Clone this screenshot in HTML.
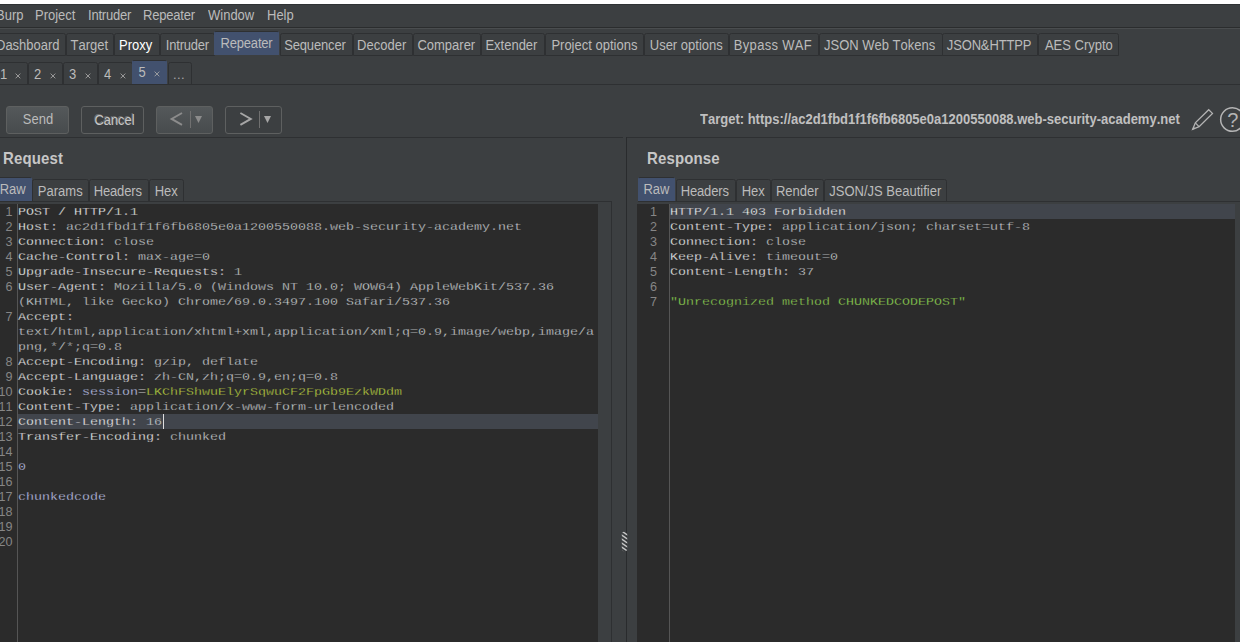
<!DOCTYPE html>
<html><head><meta charset="utf-8"><title>Burp Suite Repeater</title>
<style>
html,body{margin:0;padding:0;}
body{font-kerning:none;width:1240px;height:642px;overflow:hidden;background:#3c3f41;position:relative;font-family:"Liberation Sans",Arial,sans-serif;font-size:13px;color:#bbbbbb;}
.abs{position:absolute;}
#top{left:0;top:0;width:1240px;height:4px;background:#ffffff;}
.menu{top:7px;height:18px;line-height:18px;white-space:nowrap;font-size:13px;color:#bbbbbb;}
.hl{height:1px;}
.tab{box-sizing:border-box;border:1px solid #2e3032;border-bottom:1px solid #2e3032;border-radius:2.5px 2.5px 0 0;text-align:center;white-space:nowrap;color:#bbbbbb;background:#3c3f41;}
.tab.sel{background:#42516e;border-color:#2e3032 #42516e #42516e #42516e;border-radius:2px 2px 0 0;}
.mt{top:33px;height:23px;line-height:23px;font-size:13px;}
.mt.sel{top:31px;height:24px;line-height:24px;}
.st{top:62px;height:23px;line-height:24px;font-size:13px;}
.st.sel{top:60px;height:24px;line-height:23px;}
.et{top:179px;height:23px;line-height:23px;font-size:13px;}
.et.sel{top:177px;height:25px;line-height:23px;}
.t2{transform:scaleY(1.11);transform-origin:0 calc(50% + 5.2px);letter-spacing:0.13px;}
.t{display:inline-block;transform:scaleY(1.075);transform-origin:0 calc(50% + 4.5px);}
.btn{box-sizing:border-box;top:106px;height:28px;border:1px solid #5e6060;border-radius:3px;text-align:center;line-height:26px;font-size:13px;color:#bbbbbb;background:#3c3f41;}
.btn.on{background:linear-gradient(#54585a,#474b4d);}
.title{font-weight:bold;font-size:15px;color:#c6c6c6;white-space:nowrap;}
.ed{background:#2b2b2b;overflow:hidden;}
.ln{font-family:"Liberation Sans",Arial,sans-serif;font-size:12.6px;color:#868686;text-align:right;white-space:pre;line-height:15px;}
.code{font-family:"Liberation Mono","Courier New",monospace;font-size:11.5px;line-height:15px;white-space:pre;transform:scaleX(1.1594);transform-origin:0 0;color:#d8dbde;-webkit-text-stroke:0.28px #2b2b2b;}
.hlt,.hlt span{-webkit-text-stroke-color:#41454c;}
.h{color:#ffffff;}
.b{color:#ccd2ff;}
.g{color:#c2da42;}
.g2{color:#96dc54;}
.cur{background:#41454c;}
</style></head><body>
<div id="top" class="abs"></div>
<div class="abs hl" style="left:0;top:4px;width:1240px;background:#2f3234"></div>

<div class="abs menu t" style="left:-4px">Burp</div>
<div class="abs menu t" style="left:35px">Project</div>
<div class="abs menu t" style="left:88px;letter-spacing:-0.2px">Intruder</div>
<div class="abs menu t" style="left:143px;letter-spacing:-0.2px">Repeater</div>
<div class="abs menu t" style="left:208px">Window</div>
<div class="abs menu t" style="left:267px">Help</div>
<div class="abs hl" style="left:0;top:27px;width:1240px;background:#2b2d2e"></div>
<div class="abs hl" style="left:0;top:28px;width:1240px;background:#4a4d4f"></div>
<div class="abs tab mt" style="left:-8px;width:74.0px;"><span class="abs t" style="left:3px">Dashboard</span></div>
<div class="abs tab mt" style="left:65.5px;width:48.5px;"><span class="abs t" style="left:4.1px">Target</span></div>
<div class="abs tab mt" style="left:113.5px;width:46.5px;color:#ffffff;"><span class="abs t" style="left:4.5px">Proxy</span></div>
<div class="abs tab mt" style="left:159.5px;width:55.0px;"><span class="abs t" style="left:5.3px;letter-spacing:-0.2px">Intruder</span></div>
<div class="abs tab mt sel" style="left:214px;width:64.5px;"><span class="abs t" style="left:5.6000000000000005px;letter-spacing:-0.2px">Repeater</span></div>
<div class="abs tab mt" style="left:279.5px;width:73.5px;"><span class="abs t" style="left:3.7px;letter-spacing:-0.15px">Sequencer</span></div>
<div class="abs tab mt" style="left:352.5px;width:60.5px;"><span class="abs t" style="left:3.6px">Decoder</span></div>
<div class="abs tab mt" style="left:412.5px;width:68.5px;"><span class="abs t" style="left:3.9px">Comparer</span></div>
<div class="abs tab mt" style="left:480.5px;width:64.5px;"><span class="abs t" style="left:3.9px">Extender</span></div>
<div class="abs tab mt" style="left:544.5px;width:99.5px;"><span class="abs t" style="left:5.9px">Project options</span></div>
<div class="abs tab mt" style="left:643.5px;width:85.5px;"><span class="abs t" style="left:5.25px">User options</span></div>
<div class="abs tab mt" style="left:728.5px;width:90.5px;"><span class="abs t" style="left:4.35px;letter-spacing:0.3px">Bypass WAF</span></div>
<div class="abs tab mt" style="left:818.5px;width:124.0px;"><span class="abs t" style="left:4.5px">JSON Web Tokens</span></div>
<div class="abs tab mt" style="left:942px;width:96.0px;"><span class="abs t" style="left:3.8px;letter-spacing:-0.15px">JSON&amp;HTTPP</span></div>
<div class="abs tab mt" style="left:1037.5px;width:81.5px;"><span class="abs t" style="left:6.4px">AES Crypto</span></div>
<div class="abs tab st" style="left:-8px;width:36.0px;"><span class="abs t" style="left:7px">1</span><svg class="abs" style="left:21.8px;top:9.6px" width="7" height="7" viewBox="0 0 7 7"><path d="M0.6 0.6 L5.3 5.3 M5.3 0.6 L0.6 5.3" stroke="#a6a6a6" stroke-width="0.9" fill="none"/></svg></div>
<div class="abs tab st" style="left:27.5px;width:35.5px;"><span class="abs t" style="left:5.5px">2</span><svg class="abs" style="left:21.3px;top:9.6px" width="7" height="7" viewBox="0 0 7 7"><path d="M0.6 0.6 L5.3 5.3 M5.3 0.6 L0.6 5.3" stroke="#a6a6a6" stroke-width="0.9" fill="none"/></svg></div>
<div class="abs tab st" style="left:62.5px;width:35.5px;"><span class="abs t" style="left:5.5px">3</span><svg class="abs" style="left:21.3px;top:9.6px" width="7" height="7" viewBox="0 0 7 7"><path d="M0.6 0.6 L5.3 5.3 M5.3 0.6 L0.6 5.3" stroke="#a6a6a6" stroke-width="0.9" fill="none"/></svg></div>
<div class="abs tab st" style="left:97.5px;width:35.0px;"><span class="abs t" style="left:5.5px">4</span><svg class="abs" style="left:21.3px;top:9.6px" width="7" height="7" viewBox="0 0 7 7"><path d="M0.6 0.6 L5.3 5.3 M5.3 0.6 L0.6 5.3" stroke="#a6a6a6" stroke-width="0.9" fill="none"/></svg></div>
<div class="abs tab st sel" style="left:132px;width:35.0px;"><span class="abs t" style="left:5.5px">5</span><svg class="abs" style="left:21.3px;top:9.6px" width="7" height="7" viewBox="0 0 7 7"><path d="M0.6 0.6 L5.3 5.3 M5.3 0.6 L0.6 5.3" stroke="#a6a6a6" stroke-width="0.9" fill="none"/></svg></div>
<div class="abs tab st" style="left:168px;width:24px;color:#a8a8a8"><span class="abs" style="left:4px;top:-0.5px;letter-spacing:0.4px">...</span></div>
<div class="abs hl" style="left:0;top:84px;width:1240px;background:#2e3032"></div>
<div class="abs btn on" style="left:6px;width:63px;padding-left:1px"><span class="t">Send</span></div>
<div class="abs btn" style="left:81px;width:63px;padding-left:3px"><span class="t" style="position:relative;top:1px;left:0.5px;color:#c6c6c6;text-shadow:-1px -1px 0 #6c6c6c;letter-spacing:-0.1px">Cancel</span></div>
<div class="abs btn on" style="left:156px;width:57px"><svg class="abs" style="left:-1px;top:-1px" width="57" height="28" viewBox="0 0 57 28"><polyline points="26,7 15.6,12.9 26,18.8" fill="none" stroke="#8c8c8c" stroke-width="1.9"/><rect x="34" y="5" width="1" height="17" fill="#707070"/><path d="M39 10 L46 10 L42.5 17 Z" fill="#8c8c8c"/></svg></div>
<div class="abs btn" style="left:225px;width:57px"><svg class="abs" style="left:-1px;top:-1px" width="57" height="28" viewBox="0 0 57 28"><polyline points="15.4,7 25.8,12.9 15.4,18.8" fill="none" stroke="#a6a6a6" stroke-width="1.9"/><rect x="34" y="5" width="1" height="17" fill="#707070"/><path d="M39 10 L46 10 L42.5 17 Z" fill="#a6a6a6"/></svg></div>
<div class="abs title t" style="left:700px;top:112px;font-size:13px;color:#c0c0c0">Target: https://ac2d1fbd1f1f6fb6805e0a1200550088.web-security-academy.net</div>
<svg class="abs" style="left:1188px;top:105px" width="52" height="30" viewBox="0 0 52 30">
<g fill="none" stroke="#b4b4b4" stroke-width="1.25" stroke-linejoin="miter">
<path d="M4.6 24.4 L7.3 17.9 L20.7 4.7 L24.5 8.4 L11.1 21.6 Z"/>
<path d="M7.3 17.9 L11.1 21.6"/>
<path d="M4.6 24.4 L7 23.4 L5.6 22 Z" fill="#b4b4b4" stroke-width="0.6"/>
<circle cx="44.45" cy="14.55" r="11.8" stroke-width="1.5"/>
</g>
<text x="44.8" y="22.3" font-family="Liberation Sans, Arial, sans-serif" font-size="20" fill="#b4b4b4" text-anchor="middle">?</text>
</svg>
<div class="abs hl" style="left:0;top:137px;width:623px;background:#2e3032"></div>
<div class="abs hl" style="left:626px;top:137px;width:614px;background:#2e3032"></div>
<div class="abs" style="left:626px;top:137px;width:1px;height:505px;background:#292b2d"></div>
<div class="abs" style="left:611px;top:201px;width:1px;height:441px;background:#2e3032"></div>
<div class="abs title t2" style="left:3px;top:150px;">Request</div>
<div class="abs title t2" style="left:647px;top:150px;">Response</div>
<div class="abs tab et sel" style="left:-8px;width:40.0px;padding-left:1.5px;"><span class="t">Raw</span></div>
<div class="abs tab et" style="left:31.5px;width:57.5px;"><span class="t">Params</span></div>
<div class="abs tab et" style="left:88.5px;width:60.5px;"><span class="t" style="letter-spacing:-0.15px;position:relative;left:-1px">Headers</span></div>
<div class="abs tab et" style="left:148.5px;width:35.5px;"><span class="t">Hex</span></div>
<div class="abs tab et sel" style="left:638px;width:37.0px;"><span class="t">Raw</span></div>
<div class="abs tab et" style="left:675.5px;width:60.5px;"><span class="t" style="letter-spacing:-0.15px;position:relative;left:-1px">Headers</span></div>
<div class="abs tab et" style="left:735.5px;width:35.5px;"><span class="t">Hex</span></div>
<div class="abs tab et" style="left:770.5px;width:53.5px;"><span class="t">Render</span></div>
<div class="abs tab et" style="left:823.5px;width:123.5px;"><span class="t">JSON/JS Beautifier</span></div>
<div class="abs hl" style="left:0;top:201px;width:612px;background:#2e3032"></div>
<div class="abs hl" style="left:638px;top:201px;width:602px;background:#2e3032"></div>
<div class="abs ed" style="left:0;top:204px;width:598px;height:438px"></div>
<div class="abs cur" style="left:18px;top:414px;width:580px;height:15px"></div>
<div class="abs" style="left:163px;top:414px;width:1px;height:15px;background:#dddddd"></div>
<div class="abs" style="left:17px;top:204px;width:1px;height:438px;background:#555555"></div>
<div class="abs ln" style="left:-20px;top:204.7px;width:32.5px">1
2
3
4
5
6

7


8
9
10
11
12
13
14
15
16
17
18
19
20</div>
<div class="abs code" style="left:18px;top:203.6px;"><span class="h">POST / HTTP/1.1</span>
<span class="h">Host:</span> ac2d1fbd1f1f6fb6805e0a1200550088.web-security-academy.net
<span class="h">Connection:</span> close
<span class="h">Cache-Control:</span> max-age=0
<span class="h">Upgrade-Insecure-Requests:</span> 1
<span class="h">User-Agent:</span> Mozilla/5.0 (Windows NT 10.0; WOW64) AppleWebKit/537.36
(KHTML, like Gecko) Chrome/69.0.3497.100 Safari/537.36
<span class="h">Accept:</span>
text/html,application/xhtml+xml,application/xml;q=0.9,image/webp,image/a
png,*/*;q=0.8
<span class="h">Accept-Encoding:</span> gzip, deflate
<span class="h">Accept-Language:</span> zh-CN,zh;q=0.9,en;q=0.8
<span class="h">Cookie:</span> <span class="b">session</span><span class="h">=</span><span class="g">LKChFShwuElyrSqwuCF2FpGb9EzkWDdm</span>
<span class="h">Content-Type:</span> application/x-www-form-urlencoded
<span class="hlt"><span class="h">Content-Length:</span> 16</span>
<span class="h">Transfer-Encoding:</span> chunked

<span class="b">0</span>

<span class="b">chunkedcode</span>


</div>
<div class="abs ed" style="left:637px;top:204px;width:598px;height:438px"></div>
<div class="abs cur" style="left:670px;top:204px;width:565px;height:15px"></div>
<div class="abs" style="left:669px;top:204px;width:1px;height:438px;background:#555555"></div>
<div class="abs ln" style="left:626px;top:204.7px;width:31px">1
2
3
4
5
6
7</div>
<div class="abs code" style="left:669.5px;top:203.6px;"><span class="h hlt">HTTP/1.1 403 Forbidden</span>
<span class="h">Content-Type:</span> application/json; charset=utf-8
<span class="h">Connection:</span> close
<span class="h">Keep-Alive:</span> timeout=0
<span class="h">Content-Length:</span> 37

<span class="g2">"Unrecognized method CHUNKEDCODEPOST"</span></div>
<svg class="abs" style="left:621px;top:531px" width="7" height="21" viewBox="0 0 7 21"><defs><clipPath id="hc"><rect x="0.8" y="0.8" width="5.4" height="19.4" rx="2"/></clipPath></defs><g clip-path="url(#hc)" stroke="#c4c4c4" stroke-width="1.5"><path d="M-1 -1 L8 5 M-1 3 L8 9 M-1 7 L8 13 M-1 11 L8 17 M-1 15 L8 21 M-1 19 L8 25"/></g></svg>
</body></html>
